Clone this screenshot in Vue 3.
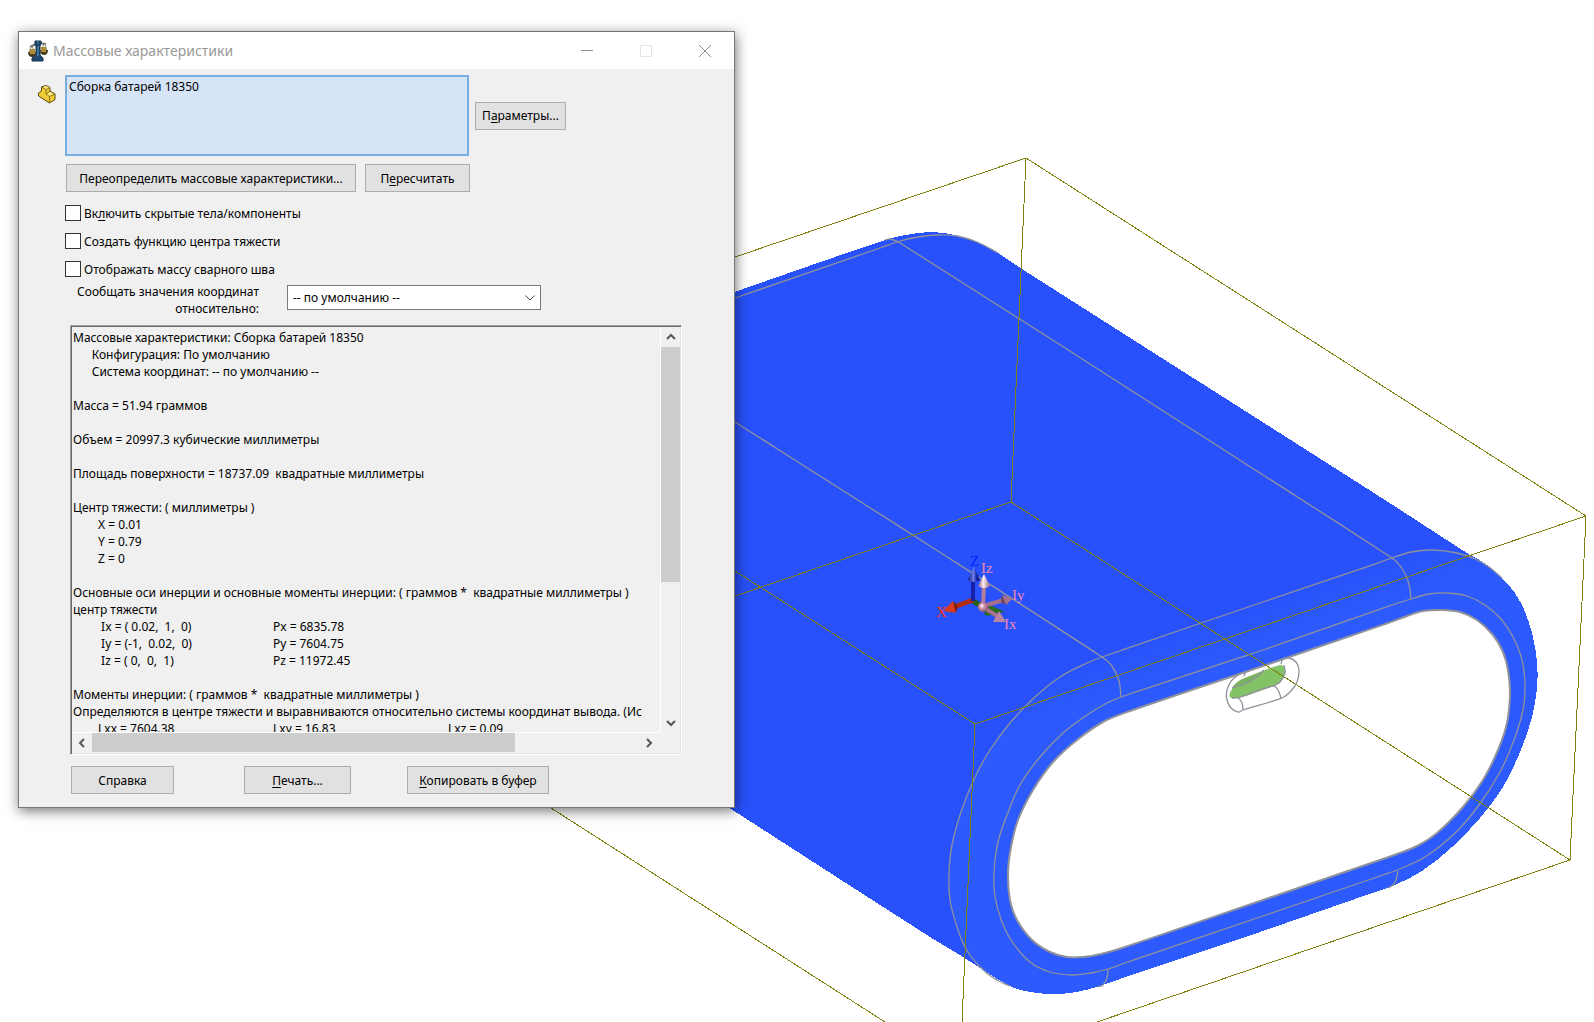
<script setup>
const picked = 'Сборка батарей 18350'

const summary = [
  'Массовые характеристики: Сборка батарей 18350',
  '      Конфигурация: По умолчанию',
  '      Система координат: -- по умолчанию --',
  '',
  'Масса = 51.94 граммов',
  '',
  'Объем = 20997.3 кубические миллиметры',
  '',
  'Площадь поверхности = 18737.09  квадратные миллиметры',
  '',
  'Центр тяжести: ( миллиметры )',
  '\tX = 0.01',
  '\tY = 0.79',
  '\tZ = 0',
  '',
  'Основные оси инерции и основные моменты инерции: ( граммов *  квадратные миллиметры )',
  'центр тяжести',
  '\t Ix = ( 0.02,  1,  0)\t\t\t\tPx = 6835.78',
  '\t Iy = (-1,  0.02,  0)\t\t\t\tPy = 7604.75',
  '\t Iz = ( 0,  0,  1)\t\t\t\tPz = 11972.45',
  '',
  'Моменты инерции: ( граммов *  квадратные миллиметры )',
  'Определяются в центре тяжести и выравниваются относительно системы координат вывода. (Ис',
  '\tLxx = 7604.38\t\t\t\tLxy = 16.83\t\t\t\t\tLxz = 0.09',
].join('\n')

// Smooth curve through points; long segments stay straight because each
// tangent follows the chord between its neighbours.
function curve(text, closed = false) {
  const p = text.trim().split(/\s+/).map((s) => s.split(',').map(Number))
  const n = p.length
  const at = (i) => (closed ? p[(i + n) % n] : p[Math.max(0, Math.min(n - 1, i))])
  const dir = (i) => {
    const a = at(i - 1)
    const b = at(i + 1)
    const l = Math.hypot(b[0] - a[0], b[1] - a[1]) || 1
    return [(b[0] - a[0]) / l, (b[1] - a[1]) / l]
  }
  let d = `M${p[0]}`
  for (let i = 0; i < (closed ? n : n - 1); i++) {
    const a = at(i)
    const b = at(i + 1)
    const l = Math.hypot(b[0] - a[0], b[1] - a[1]) / 3
    const u = dir(i)
    const v = dir(i + 1)
    d += `C${a[0] + u[0] * l},${a[1] + u[1] * l} ${b[0] - v[0] * l},${b[1] - v[1] * l} ${b}`
  }
  return closed ? d + 'Z' : d
}

const topRear = '700,304 885,240 906,235 931,232 955,235 977,242 998,253 1022,269'
const rightRim = '1470,555 1487,565 1507,583 1521,603 1532,633 1537,662 1537,688 1532,717 1520,752 1503,787 1480,818 1451,848 1422,871 1395,885'
const bottomRim = '1375,892 1260,932 1120,979 1100,986 1077,992 1055,994 1030,992 1010,986'
const leftRim = '980,967 966,949 957,927 950,900 949,873 952,845 962,809 976,775 990,750 1010,723 1035,697 1060,677 1085,664 1102,657'
const body = curve(`${topRear} 1385,500 ${rightRim} ${bottomRim} 985,971 963,957 930,937 700,789`) + 'Z'
const front = curve(`${rightRim} ${bottomRim} ${leftRim} 1260,603 1392,558 1411,552 1433,550 1457,553`, true)
const hole = curve(
  '1260,667 1130,711 1103,722 1077,740 1053,762 1033,790 1018,820 1011,847 1008,873 1010,900 1017,920 1032,940 1050,952 1067,957 1083,957 1101,954 1122,948 1260,901 1380,860 1397,854 1417,846 1437,833 1463,807 1483,780 1498,750 1507,723 1510,693 1508,670 1503,652 1493,635 1477,620 1460,612 1442,610 1423,611 1407,616 1388,623',
  true,
)
const edges = [
  '735,298 880,248 900,241 918,237 938,235 957,236 977,242 998,253',
  '885,240 890,239 900,243 1392,558 1403,570 1409,584 1411,599',
  '735,422 930,546 1102,657 1112,666 1119,681 1121,697',
  `1010,986 995,979 ${leftRim} 1260,603 1375,564 1392,558 1411,552 1433,550 1457,553 1475,559 1489,567 1502,578`,
  '1108,969 1107,978 1103,985 1098,987',
  '1398,871 1396,880 1393,885 1388,888',
].map((e) => curve(e))
edges.push(
  curve(
    '1395,604 1411,599 1429,594 1447,593 1467,596 1485,605 1501,619 1513,637 1522,660 1525,685 1523,710 1514,740 1500,772 1479,805 1455,833 1425,857 1397,870 1380,876 1260,917 1125,963 1108,969 1091,973 1073,975 1050,972 1030,962 1013,943 1002,922 995,897 994,873 998,842 1007,815 1020,785 1040,757 1063,733 1087,715 1107,703 1121,697 1260,651',
    true,
  ),
)
const port = curve('1230,697 1231,691 1237,683 1245,678 1280,665 1284,667 1285,673 1280,682 1273,686 1238,698', true)
const portEdges = [
  '1244,676 1245,672 1233,679 1227,690 1227,700 1231,708 1238,712 1243,710 1282,698 1290,692 1297,682 1299,670 1296,662 1289,658 1283,659 1281,664',
  '1232,688 1247,683 1258,676 1264,670',
  '1232,698 1238,698 1242,703 1243,710',
  '1238,698 1273,686 1278,690 1281,698',
  '1273,686 1280,682 1285,673 1284,665',
].map((e) => curve(e))
const bounds = 'M551,808L885,1022M735,257L1026,158L1586,516L1570,860L1097,1022M1026,158L1011,502L1570,860M1011,502L735,596M735,571L975,724L1586,516M975,724L962,1022'

const options = [
  { id: 'hidden', pre: 'Вк', key: 'л', post: 'ючить скрытые тела/компоненты' },
  { id: 'center', pre: 'Создать функцию центра тяжести', key: '', post: '' },
  { id: 'weld', pre: 'Отображать массу сварного шва', key: '', post: '' },
]
</script>

<template>
  <main class="desktop">
    <svg class="model" viewBox="0 0 1594 1022" preserveAspectRatio="xMinYMin slice" role="img" aria-label="Модель сборки">
      <defs>
        <linearGradient id="rim" gradientUnits="userSpaceOnUse" x1="1180" y1="625" x2="1196" y2="672">
          <stop offset="0" stop-color="#2852fb" />
          <stop offset="1" stop-color="#2c5afd" />
        </linearGradient>
        <linearGradient id="cone" x1="0" x2="1">
          <stop offset="0" stop-color="#8c5a74" />
          <stop offset="0.45" stop-color="#fff0f4" />
          <stop offset="1" stop-color="#966079" />
        </linearGradient>
        <linearGradient id="zcone" x1="0" x2="1">
          <stop offset="0" stop-color="#0c1470" />
          <stop offset="0.45" stop-color="#6f80e8" />
          <stop offset="0.7" stop-color="#1a28b0" />
          <stop offset="1" stop-color="#0b1170" />
        </linearGradient>
        <radialGradient id="ball" cx="0.4" cy="0.4" r="0.6">
          <stop offset="0" stop-color="#fff" />
          <stop offset="0.4" stop-color="#d296b0" />
          <stop offset="1" stop-color="#8c5a74" />
        </radialGradient>
      </defs>
      <g shape-rendering="crispEdges">
        <path :d="body" fill="#2851fb" />
        <path :d="front" fill="url(#rim)" />
      </g>
      <path :d="hole" class="edge thick" />
      <path v-for="(d, i) in edges" :key="i" :d="d" class="edge" />
      <path :d="port" fill="#84c266" />
      <path d="M1232,688Q1236,681 1245,678L1264,671Q1256,680 1247,683Z" fill="#7bb25f" />
      <path v-for="(d, i) in portEdges" :key="'p' + i" :d="d" class="edge" />
      <path :d="bounds" class="bounds" />

      <g class="triad">
        <path d="M973,601L988,610" stroke="#2f5d16" stroke-width="5" />
        <path d="M984,614L990,605L1005,612L996,613L988,616Z" fill="#2c6a1c" />
        <path d="M973,600L954,607" stroke="#b02c10" stroke-width="5" />
        <path d="M943,611L953,601L956,613Z" fill="#d83c1e" />
        <path d="M953,601L956,613L958,606Z" fill="#7e1e0a" />
        <path d="M973,601V579" stroke="#1620a8" stroke-width="4" />
        <path d="M974,567L968,580Q974,584 980,580Z" fill="url(#zcone)" />
        <path d="M983,606L1004,600" stroke="#a87089" stroke-width="4" />
        <path d="M1013,598L1002,595L1006,605Z" fill="#a8718b" />
        <path d="M1002,595L1006,605L1001,602Z" fill="#704558" />
        <path d="M983,607L997,616" stroke="#a87089" stroke-width="4" />
        <path d="M1006,622L999,611L993,622Z" fill="#bd859f" />
        <path d="M983,606L984,585" stroke="#b57d97" stroke-width="4" />
        <path d="M984,574L978,586Q984,590 990,586Z" fill="url(#cone)" />
        <circle cx="983" cy="607" r="5" fill="url(#ball)" />
        <text class="axis-z" x="970" y="566">Z</text>
        <text class="axis-x" x="936" y="617">X</text>
        <text x="981" y="573">Iz</text>
        <text x="1012" y="600">Iy</text>
        <text x="1004" y="629">Ix</text>
      </g>
    </svg>

    <section class="dialog" role="dialog" aria-labelledby="dialog-title">
      <header class="titlebar">
        <svg class="scale" width="20" height="22" viewBox="0 0 20 22" aria-hidden="true">
          <path d="M2,7L10,3L18,4" stroke="#6c7470" stroke-width="2" fill="none" />
          <path d="M3,6L1,13M4,6L7,13M16,4L13,11M17,4L19,11" stroke="#8a8f8a" fill="none" />
          <path d="M0,12H8Q8,17 4,17Q0,17 0,12ZM12,10H20Q20,15 16,15Q12,15 12,10Z" fill="#473d20" />
          <path d="M2,9H7V14H2ZM13,7H18V12H13Z" fill="#b28c34" />
          <path d="M7,1H13V4L12,6L12,15L15,18V21H4V18L8,15L8,6L7,4Z" fill="#214b72" stroke="#122f4c" />
          <path d="M9,2H11M10,6V16" stroke="#6599bd" />
        </svg>
        <h1 id="dialog-title">Массовые характеристики</h1>
        <button class="caption" aria-label="Свернуть">
          <svg width="12" height="12" viewBox="0 0 12 12"><path d="M0,5.500H12" stroke="#8f8f8f" /></svg>
        </button>
        <button class="caption" aria-label="Развернуть" disabled>
          <svg width="12" height="12" viewBox="0 0 12 12"><path d="M.5,.5H11.500V11.500H.5Z" stroke="#e4e4e4" fill="none" /></svg>
        </button>
        <button class="caption" aria-label="Закрыть">
          <svg width="12" height="12" viewBox="0 0 12 12"><path d="M0,0L12,12M12,0L0,12" stroke="#8a8a8a" /></svg>
        </button>
      </header>

      <div class="content">
        <div class="selection">
          <svg class="part" width="18" height="19" viewBox="0 0 18 19" aria-hidden="true">
            <path d="M.5,8L3.500,6V2L8,.5L12,2.500V6L17,9V14.500L11.500,18L.5,11Z" fill="#f0cd38" stroke="#5b480c" />
            <path d="M3.500,2L8,4.500L12,2.500M8,4.500V9L12,6M8,9L11.500,11.500L17,9M11.500,11.500V18" fill="none" stroke="#8a7018" />
            <path d="M8,1L11,2.500L8,4L5,2.300ZM12,7L15.500,9L11.500,10.800L9,9.200Z" fill="#fbe98a" />
          </svg>
          <textarea class="picked" readonly aria-label="Выбранные элементы" :value="picked"></textarea>
          <button class="push w-params">П<u>а</u>раметры...</button>
        </div>

        <div class="actions">
          <button class="push w-override">Переопределить массовые характеристики...</button>
          <button class="push w-recalc">П<u>е</u>ресчитать</button>
        </div>

        <div class="options">
          <div v-for="o in options" :key="o.id" class="option">
            <input :id="o.id" type="checkbox" />
            <label :for="o.id">{{ o.pre }}<u v-if="o.key">{{ o.key }}</u>{{ o.post }}</label>
          </div>
        </div>

        <div class="coords">
          <label for="coord">Сообщать значения координат относительно:</label>
          <div class="combo">
            <select id="coord"><option>-- по умолчанию --</option></select>
            <svg width="10" height="6" viewBox="0 0 10 6" aria-hidden="true"><path d="M.5,.5L5,5L9.500,.5" fill="none" stroke="#444" /></svg>
          </div>
        </div>

        <div class="report">
          <textarea class="report-text" readonly wrap="off" aria-label="Результаты" :value="summary"></textarea>
          <div class="bar vertical">
            <button aria-label="Вверх"><svg width="10" height="8" viewBox="0 0 10 8"><path d="M1,6L5,2L9,6" /></svg></button>
            <span class="thumb"></span>
            <button class="end" aria-label="Вниз"><svg width="10" height="8" viewBox="0 0 10 8"><path d="M1,2L5,6L9,2" /></svg></button>
          </div>
          <div class="bar horizontal">
            <button aria-label="Влево"><svg width="8" height="10" viewBox="0 0 8 10"><path d="M6,1L2,5L6,9" /></svg></button>
            <span class="thumb"></span>
            <button class="end" aria-label="Вправо"><svg width="8" height="10" viewBox="0 0 8 10"><path d="M2,1L6,5L2,9" /></svg></button>
          </div>
        </div>

        <footer class="footer">
          <button class="push w-help">Справка</button>
          <button class="push w-print"><u>П</u>ечать...</button>
          <button class="push w-copy"><u>К</u>опировать в буфер</button>
        </footer>
      </div>
    </section>
  </main>
</template>

<style>
body {
  margin: 0;
  background: #fff;
}
</style>

<style scoped>
.desktop {
  position: relative;
  min-height: 100vh;
  overflow: hidden;
  font: 12px/17px "Noto Sans", "Open Sans", sans-serif;
  color: #000;
}
.model {
  display: block;
  width: 100%;
  height: 100vh;
}
.edge {
  fill: none;
  stroke: #8f929c;
  stroke-width: 1.3;
}
.edge.thick {
  fill: #fff;
  stroke-width: 2;
}
.bounds {
  fill: none;
  stroke: #808010;
  stroke-width: 1;
  shape-rendering: crispEdges;
}
.triad text {
  font: 15px "Liberation Serif", serif;
  fill: #ee88b8;
}
.triad .axis-z {
  fill: #0a20ff;
}
.triad .axis-x {
  fill: #f03818;
}
.dialog {
  position: absolute;
  left: 18px;
  top: 31px;
  box-sizing: border-box;
  width: 717px;
  border: 1px solid #777;
  background: #f0f0f0;
  box-shadow: 1px 3px 12px rgba(0, 0, 0, 0.55);
}
.titlebar {
  display: flex;
  align-items: center;
  height: 37px;
  padding-left: 9px;
  background: #fff;
}
h1 {
  flex: 1;
  margin: 0 0 0 5px;
  font-size: 14px;
  font-weight: 400;
  color: #999;
}
.caption {
  display: grid;
  place-items: center;
  width: 59px;
  height: 37px;
  padding: 0;
  border: 0;
  background: none;
}
button,
select,
textarea {
  font: inherit;
  color: inherit;
}
.content {
  padding: 6px 52px 13px 46px;
}
.selection {
  display: flex;
  align-items: center;
  margin-left: -27px;
}
.part {
  align-self: flex-start;
  margin: 10px 9px 0 0;
}
.picked {
  box-sizing: border-box;
  width: 404px;
  height: 81px;
  margin-right: 6px;
  padding: 1px 2px;
  border: 2px solid #78aee2;
  background: #d5e4f7;
  resize: none;
  outline: none;
  overflow: hidden;
}
.push {
  height: 28px;
  padding: 0;
  border: 1px solid #adadad;
  background: #e1e1e1;
  white-space: nowrap;
}
u {
  text-underline-offset: 2px;
}
.w-params { width: 91px; }
.w-override { width: 290px; }
.w-recalc { width: 105px; }
.w-help { width: 103px; }
.w-print { width: 107px; }
.w-copy { width: 142px; }
.actions {
  display: flex;
  gap: 9px;
  margin: 8px 0 0 1px;
}
.options {
  display: grid;
  gap: 10px;
  margin-top: 12px;
}
.option {
  display: flex;
  align-items: center;
  gap: 3px;
}
.option label {
  padding-top: 2px;
  line-height: 16px;
}
input {
  appearance: none;
  width: 16px;
  height: 16px;
  margin: 0;
  border: 1px solid #333;
  background: #fff;
}
.coords {
  display: flex;
  gap: 28px;
  margin-top: 5px;
}
.coords label {
  width: 194px;
  text-align: right;
}
.combo {
  position: relative;
  width: 254px;
}
.combo svg {
  position: absolute;
  right: 6px;
  top: 12px;
  pointer-events: none;
}
select {
  appearance: none;
  width: 100%;
  height: 25px;
  margin-top: 2px;
  padding: 0 5px;
  border: 1px solid #7a7a7a;
  border-radius: 0;
  background: #fff;
}
.report {
  display: grid;
  grid-template: 406px 20px / 1fr 19px;
  margin: 8px 0 0 5px;
  border: 1px solid;
  border-color: #a0a0a0 #fff #fff #a0a0a0;
  box-shadow: inset 1px 1px #696969, inset -1px -1px #e3e3e3;
  padding: 1px;
}
.report-text {
  display: block;
  box-sizing: border-box;
  width: 100%;
  height: 100%;
  padding: 2px 0 0 1px;
  border: 0;
  border-right: 1px solid #fff;
  border-bottom: 1px solid #fff;
  background: none;
  resize: none;
  outline: none;
  overflow: hidden;
  white-space: pre;
  tab-size: 25px;
}
.bar {
  display: flex;
}
.vertical {
  flex-direction: column;
  grid-area: 1 / 2;
}
.horizontal {
  grid-area: 2 / 1;
  padding-right: 2px;
}
.bar button {
  display: grid;
  place-items: center;
  flex: none;
  width: 20px;
  height: 20px;
  padding: 0;
  border: 0;
  background: none;
}
.bar .end {
  margin: auto 0 0 auto;
}
.bar path {
  fill: none;
  stroke: #555;
  stroke-width: 2;
}
.thumb {
  background: #cdcdcd;
}
.vertical .thumb {
  width: 19px;
  height: 58%;
}
.horizontal .thumb {
  width: 72%;
  height: 19px;
}
.footer {
  display: flex;
  margin: 11px 0 0 6px;
}
.w-print {
  margin: 0 56px 0 70px;
}
</style>
